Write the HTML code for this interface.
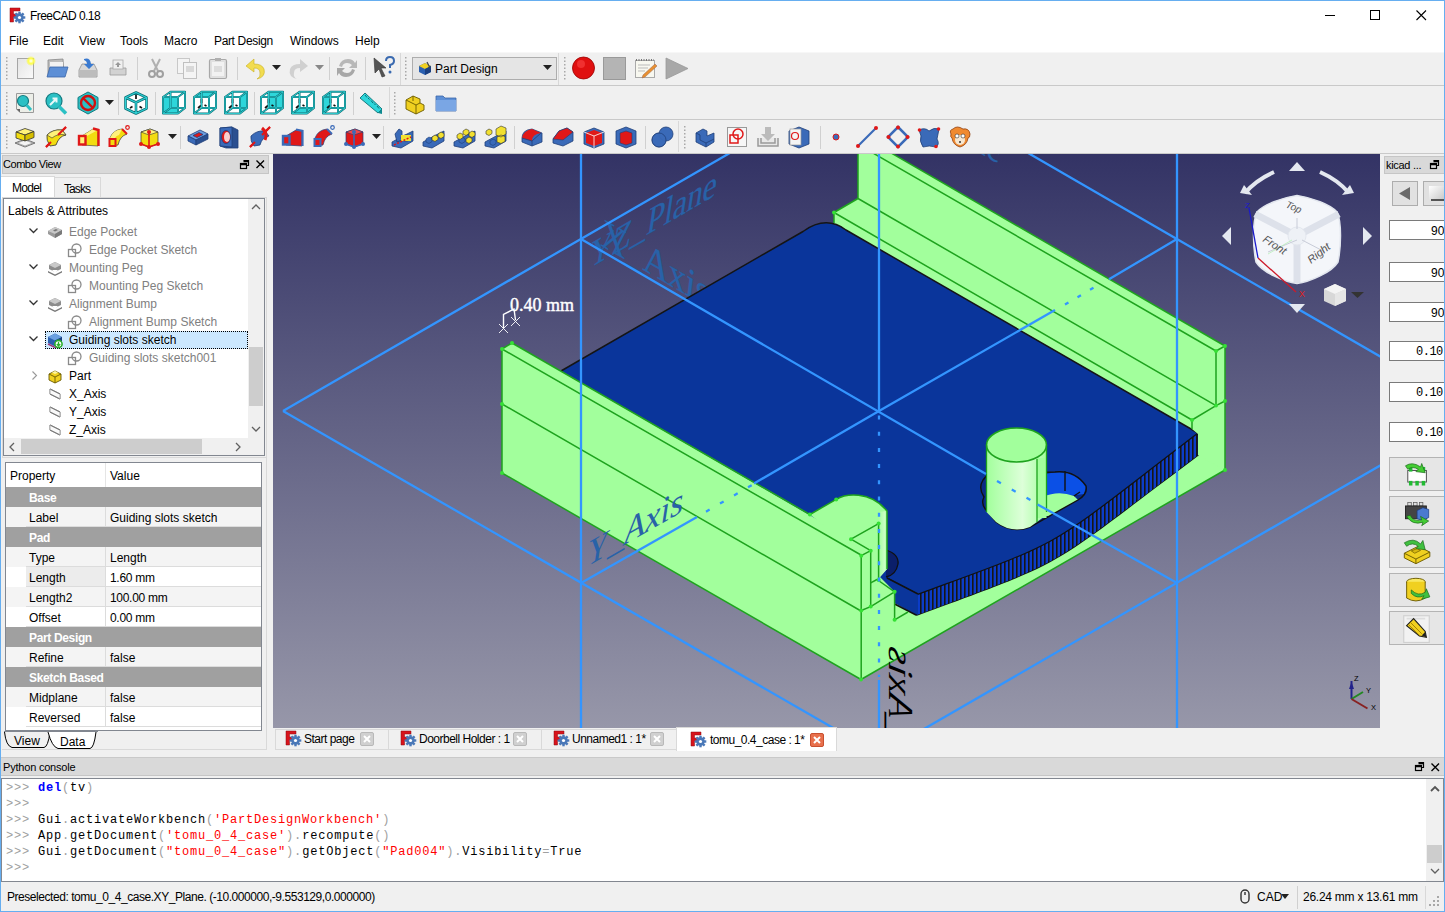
<!DOCTYPE html>
<html><head><meta charset="utf-8"><style>*{margin:0;padding:0;box-sizing:border-box}
html,body{width:1445px;height:912px;overflow:hidden;background:#f0f0f0;font-family:"Liberation Sans",sans-serif;font-size:12px;color:#000}
.a{position:absolute}
.t{position:absolute;white-space:nowrap;line-height:14px;height:14px}
.g{color:#808080}
svg{position:absolute;overflow:visible}
.mono{font-family:"Liberation Mono",monospace;font-size:12px;letter-spacing:0.8px}
.pr{color:#a0a0a0}
.kw{color:#0000ff;font-weight:bold}
.st{color:#ff0000}
#frame{position:absolute;left:0;top:0;width:1445px;height:912px;border:1px solid #66aef0;pointer-events:none;z-index:50}
</style></head><body>
<div class="a" style="left:0px;top:0px;width:1445px;height:52px;background:#fff"></div>
<svg style="left:9px;top:7px" width="17" height="17" viewBox="0 0 17 17"><path d="M1,1 H11 V4 H4.5 V7 H9 V10 H4.5 V15 H1 Z" fill="#d8141c"/><path d="M1,1 H11 V4 H4.5 V7 H9 V10 H4.5 V15 H1 Z" fill="none" stroke="#8a0a10" stroke-width="0.5"/><g transform="translate(10.5,10.5)"><circle r="4.2" fill="#4a78b8"/><g fill="#4a78b8"><rect x="-1.2" y="-5.8" width="2.4" height="11.6"/><rect x="-5.8" y="-1.2" width="11.6" height="2.4"/><rect x="-1.2" y="-5.8" width="2.4" height="11.6" transform="rotate(45)"/><rect x="-1.2" y="-5.8" width="2.4" height="11.6" transform="rotate(-45)"/></g><circle r="1.6" fill="#fff"/></g></svg>
<div class="t " style="left:30px;top:9px;letter-spacing:-0.55px">FreeCAD 0.18</div>
<svg style="left:1318px;top:8px" width="22" height="14" viewBox="0 0 22 14"><path d="M7,7.5 H17" stroke="#000" stroke-width="1"/></svg>
<svg style="left:1364px;top:8px" width="22" height="14" viewBox="0 0 22 14"><rect x="6.5" y="2.5" width="9" height="9" fill="none" stroke="#000" stroke-width="1"/></svg>
<svg style="left:1410px;top:8px" width="22" height="14" viewBox="0 0 22 14"><path d="M6.5,2.5 L16,12 M16,2.5 L6.5,12" stroke="#000" stroke-width="1.1"/></svg>
<div class="t " style="left:9px;top:34px;">File</div>
<div class="t " style="left:43px;top:34px;">Edit</div>
<div class="t " style="left:79px;top:34px;">View</div>
<div class="t " style="left:120px;top:34px;">Tools</div>
<div class="t " style="left:164px;top:34px;">Macro</div>
<div class="t " style="left:214px;top:34px;letter-spacing:-0.35px">Part Design</div>
<div class="t " style="left:290px;top:34px;">Windows</div>
<div class="t " style="left:355px;top:34px;">Help</div>
<div class="a" style="left:0px;top:52px;width:1445px;height:1px;background:#f7f7f7"></div>
<div class="a" style="left:1px;top:85px;width:1443px;height:1px;background:#c9c9c9"></div>
<div class="a" style="left:1px;top:119px;width:1443px;height:1px;background:#c9c9c9"></div>
<div class="a" style="left:1px;top:153px;width:1443px;height:1px;background:#c9c9c9"></div>
<svg style="left:5px;top:56px" width="4" height="25" viewBox="0 0 4 25"><rect x="1" y="1.0" width="1.5" height="1.5" fill="#a8a8a8"/><rect x="1" y="4.5" width="1.5" height="1.5" fill="#a8a8a8"/><rect x="1" y="8.0" width="1.5" height="1.5" fill="#a8a8a8"/><rect x="1" y="11.5" width="1.5" height="1.5" fill="#a8a8a8"/><rect x="1" y="15.0" width="1.5" height="1.5" fill="#a8a8a8"/><rect x="1" y="18.5" width="1.5" height="1.5" fill="#a8a8a8"/><rect x="1" y="22.0" width="1.5" height="1.5" fill="#a8a8a8"/></svg>
<svg style="left:14px;top:56px" width="24" height="24" viewBox="0 0 24 24"><rect x="3.5" y="2.5" width="16" height="20" fill="#eeeeee" stroke="#a6a6a6"/><rect x="4" y="3" width="15" height="19" fill="url(#pg)"/><defs><linearGradient id="pg" x1="0" y1="0" x2="1" y2="1"><stop offset="0" stop-color="#e4e4e4"/><stop offset="1" stop-color="#fafafa"/></linearGradient><radialGradient id="sun"><stop offset="0" stop-color="#fff"/><stop offset="0.5" stop-color="#ffff50"/><stop offset="1" stop-color="#ffff00" stop-opacity="0"/></radialGradient></defs><circle cx="17" cy="5" r="5" fill="url(#sun)"/></svg>
<svg style="left:44px;top:56px" width="24" height="24" viewBox="0 0 24 24"><path d="M4,4 L19,3 L20,20 L4,20 Z" fill="#bdbdbd" stroke="#888" stroke-width="0.8"/><path d="M6,6 H19 V18 H6Z" fill="#f2f2f2"/><path d="M6,11 L24,11 L21,21 L3,21 Z" fill="#5d8fd6" stroke="#3a66a8" stroke-width="0.8"/></svg>
<svg style="left:76px;top:56px" width="24" height="24" viewBox="0 0 24 24"><path d="M3,14 L6,8 H18 L21,14 V21 H3 Z" fill="#d7d7d7" stroke="#909090" stroke-width="0.8"/><rect x="3.5" y="14" width="17" height="6.5" fill="#bcbcbc"/><path d="M8,3 Q14,1 15,8 L18,8 L13,13 L8,8 L11,8 Q11,5 8,4Z" fill="#3a7ad0"/></svg>
<svg style="left:106px;top:56px" width="24" height="24" viewBox="0 0 24 24"><path d="M4,12 H20 V19 H4Z" fill="#d2d2d2" stroke="#999" stroke-width="0.8"/><rect x="7" y="4" width="10" height="9" fill="#f0f0f0" stroke="#aaa" stroke-width="0.8"/><path d="M12,6 L9,9 H11 V11 H13 V9 H15Z" fill="#999"/></svg>
<div class="a" style="left:137px;top:57px;width:1px;height:23px;background:#d0d0d0"></div>
<svg style="left:144px;top:56px" width="24" height="24" viewBox="0 0 24 24"><path d="M8,3 L14,15 M16,3 L10,15" stroke="#b0b0b0" stroke-width="2"/><circle cx="8" cy="18" r="3" fill="none" stroke="#a0a0a0" stroke-width="2"/><circle cx="16" cy="18" r="3" fill="none" stroke="#a0a0a0" stroke-width="2"/></svg>
<svg style="left:175px;top:56px" width="24" height="24" viewBox="0 0 24 24"><rect x="2.5" y="2.5" width="12" height="15" fill="#f4f4f4" stroke="#c8c8c8"/><rect x="8.5" y="6.5" width="13" height="16" fill="#f4f4f4" stroke="#c0c0c0"/><rect x="11" y="10" width="8" height="6" fill="#d8d8d8"/></svg>
<svg style="left:206px;top:56px" width="24" height="24" viewBox="0 0 24 24"><rect x="3.5" y="3.5" width="17" height="19" rx="1.5" fill="#e0e0e0" stroke="#a8a8a8" stroke-width="1.2"/><rect x="6" y="6" width="12" height="14" fill="#f2f2f2"/><rect x="9" y="2" width="6" height="3" fill="#b0b0b0"/><rect x="8" y="10" width="8" height="6" fill="#dcdcdc"/></svg>
<div class="a" style="left:237px;top:57px;width:1px;height:23px;background:#d0d0d0"></div>
<svg style="left:244px;top:56px" width="24" height="24" viewBox="0 0 24 24"><path d="M10,3 L2,10 L10,16 V12 Q16,12 16,17 Q17,21 13,23 Q22,21 20,13 Q18,8 10,8 Z" fill="#f2dc50" stroke="#c8b020" stroke-width="0.6"/></svg>
<svg style="left:272px;top:65px" width="9" height="5" viewBox="0 0 9 5"><path d="M0,0 H9 L4.5,5 Z" fill="#222"/></svg>
<svg style="left:286px;top:56px" width="24" height="24" viewBox="0 0 24 24"><path d="M14,3 L22,10 L14,16 V12 Q8,12 8,17 Q7,21 11,23 Q2,21 4,13 Q6,8 14,8 Z" fill="#d0d0d0"/></svg>
<svg style="left:315px;top:65px" width="9" height="5" viewBox="0 0 9 5"><path d="M0,0 H9 L4.5,5 Z" fill="#888"/></svg>
<div class="a" style="left:329px;top:57px;width:1px;height:23px;background:#d0d0d0"></div>
<svg style="left:335px;top:56px" width="24" height="24" viewBox="0 0 24 24"><path d="M4,10 Q6,3 13,3 Q18,3 20,7 L22,4 V12 H14 L17,9 Q15,7 12,7 Q8,7 7,11 Z" fill="#b8b8b8"/><path d="M20,14 Q18,21 11,21 Q6,21 4,17 L2,20 V12 H10 L7,15 Q9,17 12,17 Q16,17 17,13 Z" fill="#a8a8a8"/></svg>
<div class="a" style="left:365px;top:57px;width:1px;height:23px;background:#d0d0d0"></div>
<svg style="left:372px;top:56px" width="24" height="24" viewBox="0 0 24 24"><path d="M2,2 L14,12 L9,12 L13,20 L10,21 L7,13 L3,17 Z" fill="#555" stroke="#333" stroke-width="0.6"/><path d="M14,5 Q14,1 18,1 Q22,1 22,5 Q22,8 18,9 V12" fill="none" stroke="#3a6ab0" stroke-width="2"/><circle cx="18" cy="16" r="1.5" fill="#3a6ab0"/></svg>
<div class="a" style="left:400px;top:53px;width:1px;height:32px;background:#d8d8d8"></div>
<svg style="left:404px;top:56px" width="4" height="25" viewBox="0 0 4 25"><rect x="1" y="1.0" width="1.5" height="1.5" fill="#a8a8a8"/><rect x="1" y="4.5" width="1.5" height="1.5" fill="#a8a8a8"/><rect x="1" y="8.0" width="1.5" height="1.5" fill="#a8a8a8"/><rect x="1" y="11.5" width="1.5" height="1.5" fill="#a8a8a8"/><rect x="1" y="15.0" width="1.5" height="1.5" fill="#a8a8a8"/><rect x="1" y="18.5" width="1.5" height="1.5" fill="#a8a8a8"/><rect x="1" y="22.0" width="1.5" height="1.5" fill="#a8a8a8"/></svg>
<div class="a" style="left:412px;top:57px;width:145px;height:23px;background:#e5e5e5;border:1px solid #adadad"></div>
<svg style="left:417px;top:60px" width="16" height="16" viewBox="0 0 16 16"><path d="M2,6 L8,3 L14,6 L14,12 L8,15 L2,12 Z" fill="#2a5fb0"/><path d="M2,6 L8,3 L14,6 L8,9 Z" fill="#f0d020"/><path d="M8,9 L14,6 V12 L8,15Z" fill="#1a3f80"/><path d="M10,2 L13,8" stroke="#444" stroke-width="1.2"/></svg>
<div class="t " style="left:435px;top:62px;">Part Design</div>
<svg style="left:543px;top:65px" width="9" height="5" viewBox="0 0 9 5"><path d="M0,0 H9 L4.5,5 Z" fill="#222"/></svg>
<div class="a" style="left:558px;top:53px;width:1px;height:32px;background:#d8d8d8"></div>
<svg style="left:563px;top:56px" width="4" height="25" viewBox="0 0 4 25"><rect x="1" y="1.0" width="1.5" height="1.5" fill="#a8a8a8"/><rect x="1" y="4.5" width="1.5" height="1.5" fill="#a8a8a8"/><rect x="1" y="8.0" width="1.5" height="1.5" fill="#a8a8a8"/><rect x="1" y="11.5" width="1.5" height="1.5" fill="#a8a8a8"/><rect x="1" y="15.0" width="1.5" height="1.5" fill="#a8a8a8"/><rect x="1" y="18.5" width="1.5" height="1.5" fill="#a8a8a8"/><rect x="1" y="22.0" width="1.5" height="1.5" fill="#a8a8a8"/></svg>
<svg style="left:571px;top:56px" width="25" height="25" viewBox="0 0 25 25"><circle cx="12.5" cy="12" r="11" fill="#e01010" stroke="#900" stroke-width="0.8"/><circle cx="10" cy="8" r="4" fill="#ff5050" opacity="0.5"/></svg>
<svg style="left:602px;top:56px" width="25" height="25" viewBox="0 0 25 25"><rect x="1.5" y="1.5" width="22" height="22" fill="#b4b4b4" stroke="#999"/></svg>
<svg style="left:633px;top:56px" width="24" height="24" viewBox="0 0 24 24"><rect x="2.5" y="4.5" width="19" height="17" fill="#f8f8f0" stroke="#aaa"/><path d="M3,4 H21" stroke="#777" stroke-width="2" stroke-dasharray="1,1.5"/><path d="M5,9 H17 M5,12 H15 M5,15 H12" stroke="#bbb"/><path d="M10,19 L22,8 L24,10 L12,21 L9,22Z" fill="#e89030" stroke="#965" stroke-width="0.5"/></svg>
<svg style="left:664px;top:56px" width="26" height="25" viewBox="0 0 26 25"><path d="M2,2 L24,12.5 L2,23 Z" fill="#a8a8a8" stroke="#999" stroke-width="0.8"/></svg>
<svg style="left:5px;top:91px" width="4" height="25" viewBox="0 0 4 25"><rect x="1" y="1.0" width="1.5" height="1.5" fill="#a8a8a8"/><rect x="1" y="4.5" width="1.5" height="1.5" fill="#a8a8a8"/><rect x="1" y="8.0" width="1.5" height="1.5" fill="#a8a8a8"/><rect x="1" y="11.5" width="1.5" height="1.5" fill="#a8a8a8"/><rect x="1" y="15.0" width="1.5" height="1.5" fill="#a8a8a8"/><rect x="1" y="18.5" width="1.5" height="1.5" fill="#a8a8a8"/><rect x="1" y="22.0" width="1.5" height="1.5" fill="#a8a8a8"/></svg>
<svg style="left:13px;top:91px" width="24" height="24" viewBox="0 0 24 24"><path d="M3.5,2.5 H20.5 V21.5 H7 L3.5,18 Z" fill="#eceee8" stroke="#9a9a9a"/><path d="M3.5,18 L7,18 L7,21.5Z" fill="#666"/><circle cx="10" cy="10" r="5.5" fill="#2bc0c4" stroke="#157a80" stroke-width="1.2"/><path d="M13.5,14 L18,19" stroke="#2bc0c4" stroke-width="3"/></svg>
<svg style="left:44px;top:91px" width="24" height="24" viewBox="0 0 24 24"><circle cx="10" cy="10" r="8" fill="#2bc0c4" stroke="#157a80" stroke-width="1.2"/><path d="M15,15.5 L22,22.5" stroke="#2bc0c4" stroke-width="3.5"/><path d="M6,14 L12,8 M8.5,7.5 H12.5 V11.5" stroke="#e8f8f8" stroke-width="2" fill="none"/></svg>
<svg style="left:76px;top:91px" width="24" height="24" viewBox="0 0 24 24"><path d="M12,1 L22,6.5 V17.5 L12,23 L2,17.5 V6.5 Z" fill="#2bc0c4" stroke="#157a80" stroke-width="1"/><circle cx="12" cy="12" r="7" fill="none" stroke="#d01010" stroke-width="2.4"/><path d="M7,7 L17,17" stroke="#d01010" stroke-width="2.4"/></svg>
<svg style="left:105px;top:100px" width="9" height="5" viewBox="0 0 9 5"><path d="M0,0 H9 L4.5,5 Z" fill="#222"/></svg>
<div class="a" style="left:118px;top:92px;width:1px;height:23px;background:#d0d0d0"></div>
<svg style="left:124px;top:91px" width="24" height="24" viewBox="0 0 24 24"><path d="M12,1.5 L22.5,6.5 V17.5 L12,22.5 L1.5,17.5 V6.5 Z" fill="#fff"/><g fill="none" stroke-linejoin="round"><path d="M12,1.5 L22.5,6.5 V17.5 L12,22.5 L1.5,17.5 V6.5 Z M1.5,6.5 L12,11.5 L22.5,6.5 M12,11.5 V22.5" stroke="#0e6e74" stroke-width="2.6"/><path d="M12,1.5 L22.5,6.5 V17.5 L12,22.5 L1.5,17.5 V6.5 Z M1.5,6.5 L12,11.5 L22.5,6.5 M12,11.5 V22.5" stroke="#2ed0d4" stroke-width="1.3"/></g><path d="M12,4 V8 M6,17 L8.5,15.5 M18,17 L15.5,15.5" stroke="#111" stroke-width="1.7"/></svg>
<div class="a" style="left:155px;top:92px;width:1px;height:23px;background:#d0d0d0"></div>
<svg style="left:162px;top:91px" width="24" height="24" viewBox="0 0 24 24"><path d="M1,6 L8.5,0.8 H23 V17 L16,22.5 H1 Z" fill="#fff"/><path d="M1,6 L16,6 L16,22.5 L1,22.5 Z" fill="#2ed6da"/><path d="M1,6 L16,6 L16,22.5 L1,22.5 Z M8.5,0.8 L23,0.8 L23,17 L8.5,17 Z M1,6 L8.5,0.8 M16,6 L23,0.8 M16,22.5 L23,17 M1,22.5 L8.5,17" fill="none" stroke="#0e6e74" stroke-width="2" stroke-linejoin="round"/><path d="M1,6 L16,6 L16,22.5 L1,22.5 Z M8.5,0.8 L23,0.8 L23,17 L8.5,17 Z M1,6 L8.5,0.8 M16,6 L23,0.8 M16,22.5 L23,17 M1,22.5 L8.5,17" fill="none" stroke="#2ed0d4" stroke-width="0.9" stroke-linejoin="round"/></svg>
<svg style="left:193px;top:91px" width="24" height="24" viewBox="0 0 24 24"><path d="M1,6 L8.5,0.8 H23 V17 L16,22.5 H1 Z" fill="#fff"/><path d="M1,6 L8.5,0.8 L23,0.8 L16,6 Z" fill="#2ed6da"/><path d="M8.5,8 V12 M5,17 L8,14.5 M11.5,14 L13.5,15" stroke="#111" stroke-width="1.7"/><path d="M1,6 L16,6 L16,22.5 L1,22.5 Z M8.5,0.8 L23,0.8 L23,17 L8.5,17 Z M1,6 L8.5,0.8 M16,6 L23,0.8 M16,22.5 L23,17 M1,22.5 L8.5,17" fill="none" stroke="#0e6e74" stroke-width="2" stroke-linejoin="round"/><path d="M1,6 L16,6 L16,22.5 L1,22.5 Z M8.5,0.8 L23,0.8 L23,17 L8.5,17 Z M1,6 L8.5,0.8 M16,6 L23,0.8 M16,22.5 L23,17 M1,22.5 L8.5,17" fill="none" stroke="#2ed0d4" stroke-width="0.9" stroke-linejoin="round"/></svg>
<svg style="left:224px;top:91px" width="24" height="24" viewBox="0 0 24 24"><path d="M1,6 L8.5,0.8 H23 V17 L16,22.5 H1 Z" fill="#fff"/><path d="M16,6 L23,0.8 L23,17 L16,22.5 Z" fill="#2ed6da"/><path d="M8.5,8 V12 M5,17 L8,14.5 M11.5,14 L13.5,15" stroke="#111" stroke-width="1.7"/><path d="M1,6 L16,6 L16,22.5 L1,22.5 Z M8.5,0.8 L23,0.8 L23,17 L8.5,17 Z M1,6 L8.5,0.8 M16,6 L23,0.8 M16,22.5 L23,17 M1,22.5 L8.5,17" fill="none" stroke="#0e6e74" stroke-width="2" stroke-linejoin="round"/><path d="M1,6 L16,6 L16,22.5 L1,22.5 Z M8.5,0.8 L23,0.8 L23,17 L8.5,17 Z M1,6 L8.5,0.8 M16,6 L23,0.8 M16,22.5 L23,17 M1,22.5 L8.5,17" fill="none" stroke="#2ed0d4" stroke-width="0.9" stroke-linejoin="round"/></svg>
<div class="a" style="left:254px;top:92px;width:1px;height:23px;background:#d0d0d0"></div>
<svg style="left:260px;top:91px" width="24" height="24" viewBox="0 0 24 24"><path d="M1,6 L8.5,0.8 H23 V17 L16,22.5 H1 Z" fill="#fff"/><path d="M8.5,0.8 L23,0.8 L23,17 L8.5,17 Z" fill="#2ed6da"/><path d="M8.5,8 V12 M5,17 L8,14.5 M11.5,14 L13.5,15" stroke="#111" stroke-width="1.7"/><path d="M1,6 L16,6 L16,22.5 L1,22.5 Z M8.5,0.8 L23,0.8 L23,17 L8.5,17 Z M1,6 L8.5,0.8 M16,6 L23,0.8 M16,22.5 L23,17 M1,22.5 L8.5,17" fill="none" stroke="#0e6e74" stroke-width="2" stroke-linejoin="round"/><path d="M1,6 L16,6 L16,22.5 L1,22.5 Z M8.5,0.8 L23,0.8 L23,17 L8.5,17 Z M1,6 L8.5,0.8 M16,6 L23,0.8 M16,22.5 L23,17 M1,22.5 L8.5,17" fill="none" stroke="#2ed0d4" stroke-width="0.9" stroke-linejoin="round"/></svg>
<svg style="left:291px;top:91px" width="24" height="24" viewBox="0 0 24 24"><path d="M1,6 L8.5,0.8 H23 V17 L16,22.5 H1 Z" fill="#fff"/><path d="M1,22.5 L8.5,17 L23,17 L16,22.5 Z" fill="#2ed6da"/><path d="M8.5,8 V12 M5,17 L8,14.5 M11.5,14 L13.5,15" stroke="#111" stroke-width="1.7"/><path d="M1,6 L16,6 L16,22.5 L1,22.5 Z M8.5,0.8 L23,0.8 L23,17 L8.5,17 Z M1,6 L8.5,0.8 M16,6 L23,0.8 M16,22.5 L23,17 M1,22.5 L8.5,17" fill="none" stroke="#0e6e74" stroke-width="2" stroke-linejoin="round"/><path d="M1,6 L16,6 L16,22.5 L1,22.5 Z M8.5,0.8 L23,0.8 L23,17 L8.5,17 Z M1,6 L8.5,0.8 M16,6 L23,0.8 M16,22.5 L23,17 M1,22.5 L8.5,17" fill="none" stroke="#2ed0d4" stroke-width="0.9" stroke-linejoin="round"/></svg>
<svg style="left:322px;top:91px" width="24" height="24" viewBox="0 0 24 24"><path d="M1,6 L8.5,0.8 H23 V17 L16,22.5 H1 Z" fill="#fff"/><path d="M1,6 L8.5,0.8 L8.5,17 L1,22.5 Z" fill="#2ed6da"/><path d="M8.5,8 V12 M5,17 L8,14.5 M11.5,14 L13.5,15" stroke="#111" stroke-width="1.7"/><path d="M1,6 L16,6 L16,22.5 L1,22.5 Z M8.5,0.8 L23,0.8 L23,17 L8.5,17 Z M1,6 L8.5,0.8 M16,6 L23,0.8 M16,22.5 L23,17 M1,22.5 L8.5,17" fill="none" stroke="#0e6e74" stroke-width="2" stroke-linejoin="round"/><path d="M1,6 L16,6 L16,22.5 L1,22.5 Z M8.5,0.8 L23,0.8 L23,17 L8.5,17 Z M1,6 L8.5,0.8 M16,6 L23,0.8 M16,22.5 L23,17 M1,22.5 L8.5,17" fill="none" stroke="#2ed0d4" stroke-width="0.9" stroke-linejoin="round"/></svg>
<div class="a" style="left:353px;top:92px;width:1px;height:23px;background:#d0d0d0"></div>
<svg style="left:359px;top:91px" width="24" height="24" viewBox="0 0 24 24"><path d="M1,7 L6,2 L23,18 L19,22 Z" fill="#2ed6da" stroke="#0e6e74" stroke-width="0.9"/><path d="M19,22 L23,18 V23 Z" fill="#0e8a90"/><path d="M6,4 L8,6.5 M9,7 L10.5,8.5 M12,9.5 L14,12 M15,12.5 L16.5,14 M18,15 L20,17.5" stroke="#0e6e74" stroke-width="1"/></svg>
<div class="a" style="left:389px;top:87px;width:1px;height:31px;background:#d8d8d8"></div>
<svg style="left:393px;top:91px" width="4" height="25" viewBox="0 0 4 25"><rect x="1" y="1.0" width="1.5" height="1.5" fill="#a8a8a8"/><rect x="1" y="4.5" width="1.5" height="1.5" fill="#a8a8a8"/><rect x="1" y="8.0" width="1.5" height="1.5" fill="#a8a8a8"/><rect x="1" y="11.5" width="1.5" height="1.5" fill="#a8a8a8"/><rect x="1" y="15.0" width="1.5" height="1.5" fill="#a8a8a8"/><rect x="1" y="18.5" width="1.5" height="1.5" fill="#a8a8a8"/><rect x="1" y="22.0" width="1.5" height="1.5" fill="#a8a8a8"/></svg>
<svg style="left:403px;top:91px" width="24" height="24" viewBox="0 0 24 24"><path d="M3,9 L10,5 L17,8 V12 L21,14 V19 L13,23 L3,18 Z" fill="#f0d020" stroke="#6a5a00" stroke-width="0.9"/><path d="M3,9 L13,14 V23 M13,14 L17,12 M10,5 L10,10" stroke="#6a5a00" stroke-width="0.9" fill="none"/></svg>
<svg style="left:434px;top:91px" width="24" height="24" viewBox="0 0 24 24"><path d="M2,5 H9 L11,7 H22 V20 H2 Z" fill="#5d8fd6" stroke="#3a66a8" stroke-width="0.8"/><path d="M2,9 H22 V20 H2Z" fill="#7aa6e4"/></svg>
<svg style="left:5px;top:125px" width="4" height="25" viewBox="0 0 4 25"><rect x="1" y="1.0" width="1.5" height="1.5" fill="#a8a8a8"/><rect x="1" y="4.5" width="1.5" height="1.5" fill="#a8a8a8"/><rect x="1" y="8.0" width="1.5" height="1.5" fill="#a8a8a8"/><rect x="1" y="11.5" width="1.5" height="1.5" fill="#a8a8a8"/><rect x="1" y="15.0" width="1.5" height="1.5" fill="#a8a8a8"/><rect x="1" y="18.5" width="1.5" height="1.5" fill="#a8a8a8"/><rect x="1" y="22.0" width="1.5" height="1.5" fill="#a8a8a8"/></svg>
<svg style="left:13px;top:125px" width="24" height="24" viewBox="0 0 24 24"><path d="M2,18 L12,14 L22,18 L12,22 Z" fill="#f4f4f4" stroke="#666" stroke-width="0.9"/><path d="M4,18 L12,15 L20,18 L12,21 Z" fill="none" stroke="#888" stroke-width="0.7"/><path d="M3,7 L12,3.5 L21,6.5 L12,10 Z" fill="#fff27a" stroke="#333" stroke-width="0.8"/><path d="M3,7 L12,10 V16 L3,13 Z" fill="#f2dc10" stroke="#333" stroke-width="0.8"/><path d="M12,10 L21,6.5 V12.5 L12,16 Z" fill="#d6be00" stroke="#333" stroke-width="0.8"/></svg>
<svg style="left:44px;top:125px" width="24" height="24" viewBox="0 0 24 24"><path d="M2,22 L22,2" stroke="#e01818" stroke-width="2"/><path d="M3,10 Q9,4 18,5 L22,10 Q15,11 12,20 L6,21 Q2,15 3,10 Z" fill="#f2dc10" stroke="#333" stroke-width="0.8"/><path d="M3,10 Q9,4 18,5 L22,10 Q14,8 8,13 Z" fill="#fff27a" stroke="#333" stroke-width="0.6"/><path d="M14,10 L22,2 M2,22 L7,17" stroke="#e01818" stroke-width="2"/></svg>
<svg style="left:76px;top:125px" width="24" height="24" viewBox="0 0 24 24"><path d="M6,11 L17,4 L22,5 V21 L6,20 Z" fill="#f2dc10" stroke="#333" stroke-width="0.6"/><path d="M6,11 L17,4 L22,5 L9,12 Z" fill="#fff27a"/><rect x="3" y="11" width="6.5" height="8.5" fill="#fff27a" stroke="#e01818" stroke-width="2.4"/><path d="M17,3.5 L22.5,5 V21" stroke="#e01818" stroke-width="2.4" fill="none"/></svg>
<svg style="left:106px;top:125px" width="24" height="24" viewBox="0 0 24 24"><path d="M4,13 Q7,5 16,4 L21,9 Q14,11 12,20 L5,21 Z" fill="#f2dc10" stroke="#333" stroke-width="0.7"/><path d="M4,13 Q7,5 16,4 L13,10 Q9,11 9,14 Z" fill="#fff27a"/><rect x="3.5" y="14" width="6" height="7" fill="#f2dc10" stroke="#e01818" stroke-width="2"/><path d="M16,4 L21,9" stroke="#e01818" stroke-width="2"/><circle cx="21.5" cy="2.5" r="1.8" fill="none" stroke="#e01818" stroke-width="1.2"/></svg>
<svg style="left:137px;top:125px" width="24" height="24" viewBox="0 0 24 24"><path d="M4,7 L13,4 L21,7 V19 L12,22 L4,19 Z" fill="#f2dc10" stroke="#333" stroke-width="0.7"/><path d="M4,7 L13,4 L21,7 L12,10 Z" fill="#fff27a" stroke="#333" stroke-width="0.6"/><path d="M4,19 L12,22 L21,19 M12,7 V22" stroke="#e01818" stroke-width="1.6" fill="none"/><circle cx="4" cy="19" r="2" fill="#e01818"/><circle cx="12" cy="22" r="2" fill="#e01818"/><circle cx="21" cy="19" r="2" fill="#e01818"/><circle cx="12" cy="7" r="2" fill="#e01818"/></svg>
<svg style="left:168px;top:134px" width="9" height="5" viewBox="0 0 9 5"><path d="M0,0 H9 L4.5,5 Z" fill="#222"/></svg>
<div class="a" style="left:180px;top:126px;width:1px;height:23px;background:#d0d0d0"></div>
<svg style="left:186px;top:125px" width="24" height="24" viewBox="0 0 24 24"><path d="M2,11 L14,5 L22,9 L10,15 Z" fill="#6c9ee0" stroke="#1f3f78" stroke-width="0.8"/><path d="M2,11 L10,15 V20 L2,16 Z" fill="#3a6ab8" stroke="#1f3f78" stroke-width="0.8"/><path d="M10,15 L22,9 V14 L10,20 Z" fill="#2a4f90" stroke="#1f3f78" stroke-width="0.8"/><path d="M7,10.5 L13,7.5 L17,9.5 L11,12.5 Z" fill="#e01818" stroke="#1f3f78" stroke-width="0.8"/></svg>
<svg style="left:217px;top:125px" width="24" height="24" viewBox="0 0 24 24"><path d="M3,3 L15,2 L21,5 V23 L9,23 L3,21 Z" fill="#2a4f90" stroke="#1f3f78" stroke-width="0.8"/><path d="M3,3 L15,2 V22 L3,21 Z" fill="#3a6ab8" stroke="#1f3f78" stroke-width="0.8"/><ellipse cx="9" cy="12" rx="4.5" ry="6.5" fill="#e01818" stroke="#1f3f78" stroke-width="0.8"/><ellipse cx="10" cy="12" rx="3" ry="5" fill="#fff" opacity="0.8"/></svg>
<svg style="left:248px;top:125px" width="24" height="24" viewBox="0 0 24 24"><path d="M2,22 L22,2" stroke="#e01818" stroke-width="2"/><path d="M3,11 Q9,5 17,6 L21,11 Q14,12 12,20 L6,21 Q2,16 3,11 Z" fill="#3a6ab8" stroke="#1f3f78" stroke-width="0.8"/><path d="M14,3 Q20,8 17,15" stroke="#e01818" stroke-width="3" fill="none"/><path d="M14,10 L22,2 M2,22 L7,17" stroke="#e01818" stroke-width="2"/></svg>
<svg style="left:280px;top:125px" width="24" height="24" viewBox="0 0 24 24"><path d="M6,11 L16,5 L22,6 V21 L6,20 Z" fill="#e01818" stroke="#1f3f78" stroke-width="0.7"/><rect x="3" y="11" width="6.5" height="8.5" fill="#e01818" stroke="#3a6ab8" stroke-width="2.4"/><path d="M16,4.5 L22.5,6 V21" stroke="#3a6ab8" stroke-width="2.2" fill="none"/></svg>
<svg style="left:311px;top:125px" width="24" height="24" viewBox="0 0 24 24"><path d="M4,13 Q7,5 16,4 L21,9 Q14,11 12,20 L5,21 Z" fill="#e01818" stroke="#1f3f78" stroke-width="0.7"/><rect x="3.5" y="14" width="6" height="7" fill="#e01818" stroke="#3a6ab8" stroke-width="2"/><path d="M16,4 L21,9" stroke="#3a6ab8" stroke-width="2"/><circle cx="21.5" cy="2.5" r="1.8" fill="none" stroke="#3a6ab8" stroke-width="1.2"/></svg>
<svg style="left:342px;top:125px" width="24" height="24" viewBox="0 0 24 24"><path d="M4,7 L13,4 L21,7 V19 L12,22 L4,19 Z" fill="#e01818" stroke="#1f3f78" stroke-width="0.7"/><path d="M4,7 L13,4 L21,7 L12,10 Z" fill="#f04848" stroke="#1f3f78" stroke-width="0.6"/><path d="M4,19 L12,22 L21,19 M12,7 V22" stroke="#3a6ab8" stroke-width="1.6" fill="none"/><circle cx="4" cy="19" r="2" fill="#3a6ab8"/><circle cx="12" cy="22" r="2" fill="#3a6ab8"/><circle cx="21" cy="19" r="2" fill="#3a6ab8"/><circle cx="12" cy="7" r="2" fill="#3a6ab8"/></svg>
<svg style="left:372px;top:134px" width="9" height="5" viewBox="0 0 9 5"><path d="M0,0 H9 L4.5,5 Z" fill="#222"/></svg>
<div class="a" style="left:383px;top:126px;width:1px;height:23px;background:#d0d0d0"></div>
<svg style="left:391px;top:125px" width="24" height="24" viewBox="0 0 24 24"><path d="M1,17 L14,10 L22,6 V16 L10,23 L1,21 Z" fill="#3a6ab8" stroke="#1f3f78" stroke-width="0.8"/><path d="M4,9 L8,4 L11,6 V15 L6,17 Z" fill="#3a6ab8" stroke="#1f3f78" stroke-width="0.8"/><ellipse cx="15" cy="13" rx="5" ry="3" fill="#f2e030" stroke="#333" stroke-width="0.6"/><rect x="10" y="10" width="10" height="6" fill="#f2e030"/><path d="M3,20 L20,12" stroke="#e01818" stroke-width="1.5" stroke-dasharray="2,1.5"/></svg>
<svg style="left:422px;top:125px" width="24" height="24" viewBox="0 0 24 24"><path d="M1,17 L14,10 L22,6 V16 L10,23 L1,21 Z" fill="#3a6ab8" stroke="#1f3f78" stroke-width="0.8"/><path d="M4,14 l3,-2 l3,1.5 v3 l-3,2 l-3,-1.5z" fill="#3a6ab8" stroke="#1f3f78" stroke-width="0.6"/><path d="M10,12 l3,-2 l3,1.5 v3 l-3,2 l-3,-1.5z M16,9 l3,-2 l3,1.5 v3 l-3,2 l-3,-1.5z" fill="#f2e030" stroke="#333" stroke-width="0.6"/></svg>
<svg style="left:453px;top:125px" width="24" height="24" viewBox="0 0 24 24"><path d="M1,17 L14,10 L22,6 V16 L10,23 L1,21 Z" fill="#3a6ab8" stroke="#1f3f78" stroke-width="0.8"/><path d="M6,14 l3,-2 l3,1.5 v3 l-3,2 l-3,-1.5z" fill="#3a6ab8" stroke="#1f3f78" stroke-width="0.6"/><path d="M4,10 l3,-2 l3,1.5 v3 l-3,2 l-3,-1.5z M10,6 l3,-2 l3,1.5 v3 l-3,2 l-3,-1.5z M16,8 l3,-2 l3,1.5 v3 l-3,2 l-3,-1.5z M13,14 l3,-2 l3,1.5 v3 l-3,2 l-3,-1.5z" fill="#f2e030" stroke="#333" stroke-width="0.6"/></svg>
<svg style="left:484px;top:125px" width="24" height="24" viewBox="0 0 24 24"><path d="M1,17 L14,10 L22,6 V16 L10,23 L1,21 Z" fill="#3a6ab8" stroke="#1f3f78" stroke-width="0.8"/><path d="M6,16 l3,-2 l3,1.5 v3 l-3,2 l-3,-1.5z" fill="#3a6ab8" stroke="#1f3f78" stroke-width="0.6"/><path d="M12,4 l5,-3 l5,2 v6 l-5,3 l-5,-2z M13,12 l4,-2 l4,1.5 v5 l-4,2 l-4,-1.5z M2,6 l3,-2 l3,1.5 v3 l-3,2 l-3,-1.5z" fill="#f2e030" stroke="#333" stroke-width="0.6"/></svg>
<div class="a" style="left:514px;top:126px;width:1px;height:23px;background:#d0d0d0"></div>
<svg style="left:520px;top:125px" width="24" height="24" viewBox="0 0 24 24"><path d="M2,13 Q2,5 12,4 L22,8 V17 L12,21 L2,17 Z" fill="#3a6ab8" stroke="#1f3f78" stroke-width="0.8"/><path d="M2,13 Q3,6 12,4 L21,8 Q12,9 12,16 Z" fill="#e01818"/><path d="M2,13 L12,16 L21,8 M12,16 V21" stroke="#1f3f78" stroke-width="0.8" fill="none"/></svg>
<svg style="left:551px;top:125px" width="24" height="24" viewBox="0 0 24 24"><path d="M2,14 L8,6 L16,3 L22,7 V16 L12,21 L2,18 Z" fill="#3a6ab8" stroke="#1f3f78" stroke-width="0.8"/><path d="M2,14 L8,6 L16,3 L22,7 L12,15 Z" fill="#e01818" stroke="#1f3f78" stroke-width="0.6"/></svg>
<svg style="left:582px;top:125px" width="24" height="24" viewBox="0 0 24 24"><path d="M2,7 L12,3 L22,7 V19 L12,23 L2,19 Z" fill="#3a6ab8" stroke="#1f3f78" stroke-width="0.8"/><path d="M4,8 L12,5 L20,8 V18 L12,21 L4,18Z" fill="#e01818"/><path d="M2,7 L12,11 L22,7 M12,11 V23" stroke="#fff" stroke-width="0.8" fill="none"/></svg>
<svg style="left:614px;top:125px" width="24" height="24" viewBox="0 0 24 24"><path d="M2,6 L12,2 L22,6 V19 L12,23 L2,19 Z" fill="#3a6ab8" stroke="#1f3f78" stroke-width="0.8"/><path d="M6,8 L12,6 L18,8 V18 L12,20 L6,18Z" fill="#e01818" stroke="#1f3f78" stroke-width="0.6"/></svg>
<div class="a" style="left:645px;top:126px;width:1px;height:23px;background:#d0d0d0"></div>
<svg style="left:650px;top:125px" width="24" height="24" viewBox="0 0 24 24"><circle cx="9" cy="15" r="7" fill="#3a6ab8" stroke="#1f3f78" stroke-width="0.8"/><circle cx="16" cy="9" r="7" fill="#3a6ab8" stroke="#1f3f78" stroke-width="0.8"/><circle cx="9" cy="15" r="7" fill="#3a6ab8" stroke="#1f3f78" stroke-width="0.8" opacity="0.9"/></svg>
<div class="a" style="left:678px;top:121px;width:1px;height:31px;background:#d8d8d8"></div>
<svg style="left:683px;top:125px" width="4" height="25" viewBox="0 0 4 25"><rect x="1" y="1.0" width="1.5" height="1.5" fill="#a8a8a8"/><rect x="1" y="4.5" width="1.5" height="1.5" fill="#a8a8a8"/><rect x="1" y="8.0" width="1.5" height="1.5" fill="#a8a8a8"/><rect x="1" y="11.5" width="1.5" height="1.5" fill="#a8a8a8"/><rect x="1" y="15.0" width="1.5" height="1.5" fill="#a8a8a8"/><rect x="1" y="18.5" width="1.5" height="1.5" fill="#a8a8a8"/><rect x="1" y="22.0" width="1.5" height="1.5" fill="#a8a8a8"/></svg>
<svg style="left:693px;top:125px" width="24" height="24" viewBox="0 0 24 24"><path d="M3,8 L10,4 L14,6 V11 L21,8 V17 L13,22 L3,17 Z" fill="#3a6ab8" stroke="#1f3f78" stroke-width="0.8"/><path d="M3,8 L7,10 V15 L13,18 V22 M13,18 L21,14" stroke="#1f3f78" stroke-width="0.8" fill="none"/></svg>
<svg style="left:725px;top:125px" width="24" height="24" viewBox="0 0 24 24"><rect x="2.5" y="2.5" width="19" height="19" fill="#f6f6f6" stroke="#999"/><rect x="5" y="10" width="8" height="8" fill="none" stroke="#e01818" stroke-width="1.5"/><circle cx="13" cy="9" r="5" fill="none" stroke="#e01818" stroke-width="1.5"/></svg>
<svg style="left:756px;top:125px" width="24" height="24" viewBox="0 0 24 24"><path d="M2,13 V21 H22 V13 M5,13 V18 H19 V13" stroke="#999" stroke-width="1.5" fill="#e8e8e8"/><path d="M9,2 H15 V9 H19 L12,16 L5,9 H9 Z" fill="#bbb"/></svg>
<svg style="left:787px;top:125px" width="24" height="24" viewBox="0 0 24 24"><path d="M2,6 L12,2 L22,6 V19 L12,23 L2,19 Z" fill="#3a6ab8" stroke="#1f3f78" stroke-width="0.8"/><rect x="3" y="4" width="11" height="16" fill="#f4f4f4" stroke="#999" stroke-width="0.7"/><circle cx="8" cy="11" r="3.5" fill="none" stroke="#e01818" stroke-width="1.2"/></svg>
<div class="a" style="left:820px;top:126px;width:1px;height:23px;background:#d0d0d0"></div>
<svg style="left:824px;top:125px" width="24" height="24" viewBox="0 0 24 24"><circle cx="12" cy="12" r="3" fill="#3a6ab8" stroke="#e01818" stroke-width="1"/></svg>
<svg style="left:855px;top:125px" width="24" height="24" viewBox="0 0 24 24"><path d="M3,21 L21,3" stroke="#3a6ab8" stroke-width="2.2"/><circle cx="3" cy="21" r="2" fill="#e01818"/><circle cx="21" cy="3" r="2" fill="#e01818"/></svg>
<svg style="left:886px;top:125px" width="24" height="24" viewBox="0 0 24 24"><path d="M12,2 L22,12 L12,22 L2,12 Z" fill="none" stroke="#3a6ab8" stroke-width="2.5"/><circle cx="12" cy="2.5" r="2" fill="#e01818"/><circle cx="21.5" cy="12" r="2" fill="#e01818"/><circle cx="12" cy="21.5" r="2" fill="#e01818"/><circle cx="2.5" cy="12" r="2" fill="#e01818"/></svg>
<svg style="left:917px;top:125px" width="24" height="24" viewBox="0 0 24 24"><path d="M2,5 Q8,2 12,6 Q17,2 22,4 L20,14 Q23,19 19,22 Q12,20 6,22 Q2,16 4,11 Z" fill="#3a6ab8" stroke="#1f3f78" stroke-width="0.8"/><circle cx="2.5" cy="5" r="1.8" fill="#e01818"/><circle cx="21.5" cy="4" r="1.8" fill="#e01818"/><circle cx="19" cy="21.5" r="1.8" fill="#e01818"/></svg>
<svg style="left:948px;top:125px" width="24" height="24" viewBox="0 0 24 24"><path d="M3,9 Q1,5 5,4 Q9,0 15,4 Q21,3 22,9 Q22,13 20,13 Q19,20 12,22 Q5,20 4,13 Q2,12 3,9 Z" fill="#f08a30" stroke="#904010" stroke-width="0.8"/><ellipse cx="12" cy="15" rx="5" ry="5" fill="#f6e6d0"/><circle cx="9" cy="11" r="2" fill="#fff" stroke="#333" stroke-width="0.6"/><circle cx="15" cy="11" r="2" fill="#fff" stroke="#333" stroke-width="0.6"/><circle cx="12" cy="17" r="1" fill="#333"/></svg>
<div class="a" style="left:2px;top:155px;width:267px;height:19px;background:#d9d9d9;border:1px solid #c6c6c6"></div>
<div class="t " style="left:3px;top:157px;font-size:11px;letter-spacing:-0.45px">Combo View</div>
<svg style="left:240px;top:160px" width="10" height="10" viewBox="0 0 10 10"><path d="M3.5,0.5 H8.5 V5.5 H6.5" fill="none" stroke="#000" stroke-width="1.2"/><rect x="0.5" y="3.5" width="6" height="5" fill="none" stroke="#000" stroke-width="1.2"/><path d="M0.5,4.5 H6.5 M3.5,1.5 H8.5" stroke="#000" stroke-width="1.5"/></svg>
<svg style="left:256px;top:160px" width="9" height="9" viewBox="0 0 9 9"><path d="M0.5,0.5 L8,8 M8,0.5 L0.5,8" stroke="#000" stroke-width="1.4"/></svg>
<div class="a" style="left:54px;top:177px;width:47px;height:21px;background:#f0f0f0;border:1px solid #d9d9d9;border-bottom:none"></div>
<div class="a" style="left:1px;top:176px;width:54px;height:23px;background:#fff;border:1px solid #d9d9d9;border-bottom:none;border-left:none"></div>
<div class="t " style="left:12px;top:181px;letter-spacing:-0.7px">Model</div>
<div class="t " style="left:64px;top:182px;letter-spacing:-0.9px">Tasks</div>
<div class="a" style="left:2px;top:197px;width:265px;height:261px;border:1px solid #d9d9d9;background:#f0f0f0"></div>
<div class="a" style="left:3px;top:198px;width:262px;height:258px;background:#fff;border:1px solid #828790"></div>
<div class="t " style="left:8px;top:204px;">Labels &amp; Attributes</div>
<div class="a" style="left:45px;top:331px;width:203px;height:18px;background:#cce8ff;border:1px dotted #000"></div>
<svg style="left:29px;top:228px" width="9" height="6" viewBox="0 0 9 6"><path d="M0.5,0.5 L4.5,4.5 L8.5,0.5" fill="none" stroke="#333" stroke-width="1.3"/></svg>
<svg style="left:47px;top:224px" width="16" height="16" viewBox="0 0 16 16"><path d="M1,7 L8,3 L15,6 L15,10 L8,14 L1,10 Z" fill="#9a9a9a"/><path d="M1,7 L8,3 L15,6 L8,10 Z" fill="#c8c8c8"/><path d="M8,10 L15,6 L15,10 L8,14 Z" fill="#7a7a7a"/><path d="M6,6.5 L9,5 L11,6 L8,7.5 Z" fill="#777"/></svg>
<div class="t g" style="left:69px;top:225px;">Edge Pocket</div>
<svg style="left:67px;top:242px" width="16" height="16" viewBox="0 0 16 16"><rect x="1.5" y="7.5" width="7" height="7" fill="none" stroke="#8a8a8a" stroke-width="1.3"/><circle cx="9.5" cy="6.5" r="4.5" fill="none" stroke="#8a8a8a" stroke-width="1.3"/></svg>
<div class="t g" style="left:89px;top:243px;">Edge Pocket Sketch</div>
<svg style="left:29px;top:264px" width="9" height="6" viewBox="0 0 9 6"><path d="M0.5,0.5 L4.5,4.5 L8.5,0.5" fill="none" stroke="#333" stroke-width="1.3"/></svg>
<svg style="left:47px;top:260px" width="16" height="16" viewBox="0 0 16 16"><path d="M2,5 L8,2 L14,5 L14,9 L8,12 L2,9 Z" fill="#8c8c8c"/><path d="M2,5 L8,2 L14,5 L8,8 Z" fill="#c9c9c9"/><path d="M1,11 L8,14.5 L15,11 L15,12.5 L8,16 L1,12.5 Z" fill="#777"/><path d="M5,10 L8,13 L11,10" fill="#fff"/></svg>
<div class="t g" style="left:69px;top:261px;">Mounting Peg</div>
<svg style="left:67px;top:278px" width="16" height="16" viewBox="0 0 16 16"><rect x="1.5" y="7.5" width="7" height="7" fill="none" stroke="#8a8a8a" stroke-width="1.3"/><circle cx="9.5" cy="6.5" r="4.5" fill="none" stroke="#8a8a8a" stroke-width="1.3"/></svg>
<div class="t g" style="left:89px;top:279px;">Mounting Peg Sketch</div>
<svg style="left:29px;top:300px" width="9" height="6" viewBox="0 0 9 6"><path d="M0.5,0.5 L4.5,4.5 L8.5,0.5" fill="none" stroke="#333" stroke-width="1.3"/></svg>
<svg style="left:47px;top:296px" width="16" height="16" viewBox="0 0 16 16"><path d="M2,5 L8,2 L14,5 L14,9 L8,12 L2,9 Z" fill="#8c8c8c"/><path d="M2,5 L8,2 L14,5 L8,8 Z" fill="#c9c9c9"/><path d="M1,11 L8,14.5 L15,11 L15,12.5 L8,16 L1,12.5 Z" fill="#777"/><path d="M5,10 L8,13 L11,10" fill="#fff"/></svg>
<div class="t g" style="left:69px;top:297px;">Alignment Bump</div>
<svg style="left:67px;top:314px" width="16" height="16" viewBox="0 0 16 16"><rect x="1.5" y="7.5" width="7" height="7" fill="none" stroke="#8a8a8a" stroke-width="1.3"/><circle cx="9.5" cy="6.5" r="4.5" fill="none" stroke="#8a8a8a" stroke-width="1.3"/></svg>
<div class="t g" style="left:89px;top:315px;">Alignment Bump Sketch</div>
<svg style="left:29px;top:336px" width="9" height="6" viewBox="0 0 9 6"><path d="M0.5,0.5 L4.5,4.5 L8.5,0.5" fill="none" stroke="#333" stroke-width="1.3"/></svg>
<svg style="left:47px;top:332px" width="16" height="16" viewBox="0 0 16 16"><path d="M1,5 L8,1.5 L15,5 L15,11 L8,14.5 L1,11 Z" fill="#2a5fb0"/><path d="M1,5 L8,1.5 L15,5 L8,8.5 Z" fill="#6aa0e0"/><path d="M8,8.5 L15,5 L15,11 L8,14.5 Z" fill="#1a3f80"/><path d="M1,12 L8,15.5 L15,12" fill="none" stroke="#a03a7a" stroke-width="1.5"/><circle cx="11.5" cy="12" r="3.6" fill="#fff" stroke="#2cb02c" stroke-width="1.6"/><path d="M11.5,9.8 V13.5 M9.8,12 L11.5,14 L13.2,12" stroke="#2cb02c" stroke-width="1.2" fill="none"/></svg>
<div class="t " style="left:69px;top:333px;">Guiding slots sketch</div>
<svg style="left:67px;top:350px" width="16" height="16" viewBox="0 0 16 16"><rect x="1.5" y="7.5" width="7" height="7" fill="none" stroke="#8a8a8a" stroke-width="1.3"/><circle cx="9.5" cy="6.5" r="4.5" fill="none" stroke="#8a8a8a" stroke-width="1.3"/></svg>
<div class="t g" style="left:89px;top:351px;">Guiding slots sketch001</div>
<svg style="left:32px;top:371px" width="6" height="9" viewBox="0 0 6 9"><path d="M0.5,0.5 L4.5,4.5 L0.5,8.5" fill="none" stroke="#999" stroke-width="1.1"/></svg>
<svg style="left:47px;top:368px" width="16" height="16" viewBox="0 0 16 16"><path d="M2,6 L8,3 L14,6 L14,12 L8,15 L2,12 Z" fill="#f0d020" stroke="#6a5a00" stroke-width="0.9"/><path d="M2,6 L8,9 L14,6 M8,9 V15" stroke="#6a5a00" stroke-width="0.9" fill="none"/><path d="M5,4.5 L8,3 L11,4.5 L8,6 Z" fill="#fff6a0"/></svg>
<div class="t " style="left:69px;top:369px;">Part</div>
<svg style="left:47px;top:386px" width="16" height="16" viewBox="0 0 16 16"><path d="M3,3 L13,8 M3,8 L13,13 M3,3 V8 M13,8 V13" stroke="#888" stroke-width="1" fill="none"/><path d="M3,3 L13,8 L13,13 L3,8 Z" fill="#fafafa"/><path d="M3,3 L13,8 M3,8 L13,13" stroke="#777" stroke-width="1.1"/><path d="M3,3 V8 M13,8 V13" stroke="#aaa" stroke-width="1"/></svg>
<div class="t " style="left:69px;top:387px;">X_Axis</div>
<svg style="left:47px;top:404px" width="16" height="16" viewBox="0 0 16 16"><path d="M3,3 L13,8 M3,8 L13,13 M3,3 V8 M13,8 V13" stroke="#888" stroke-width="1" fill="none"/><path d="M3,3 L13,8 L13,13 L3,8 Z" fill="#fafafa"/><path d="M3,3 L13,8 M3,8 L13,13" stroke="#777" stroke-width="1.1"/><path d="M3,3 V8 M13,8 V13" stroke="#aaa" stroke-width="1"/></svg>
<div class="t " style="left:69px;top:405px;">Y_Axis</div>
<svg style="left:47px;top:422px" width="16" height="16" viewBox="0 0 16 16"><path d="M3,3 L13,8 M3,8 L13,13 M3,3 V8 M13,8 V13" stroke="#888" stroke-width="1" fill="none"/><path d="M3,3 L13,8 L13,13 L3,8 Z" fill="#fafafa"/><path d="M3,3 L13,8 M3,8 L13,13" stroke="#777" stroke-width="1.1"/><path d="M3,3 V8 M13,8 V13" stroke="#aaa" stroke-width="1"/></svg>
<div class="t " style="left:69px;top:423px;">Z_Axis</div>
<div class="a" style="left:248px;top:199px;width:16px;height:239px;background:#f0f0f0"></div>
<div class="a" style="left:249px;top:347px;width:14px;height:59px;background:#cdcdcd"></div>
<svg style="left:251px;top:204px" width="10" height="6" viewBox="0 0 10 6"><path d="M1,5 L5,1 L9,5" fill="none" stroke="#606060" stroke-width="1.3"/></svg>
<svg style="left:251px;top:426px" width="10" height="6" viewBox="0 0 10 6"><path d="M1,1 L5,5 L9,1" fill="none" stroke="#606060" stroke-width="1.3"/></svg>
<div class="a" style="left:4px;top:438px;width:244px;height:17px;background:#f0f0f0"></div>
<div class="a" style="left:21px;top:439px;width:181px;height:15px;background:#cdcdcd"></div>
<svg style="left:9px;top:442px" width="6" height="10" viewBox="0 0 6 10"><path d="M5,1 L1,5 L5,9" fill="none" stroke="#606060" stroke-width="1.3"/></svg>
<svg style="left:235px;top:442px" width="6" height="10" viewBox="0 0 6 10"><path d="M1,1 L5,5 L1,9" fill="none" stroke="#606060" stroke-width="1.3"/></svg>
<div class="a" style="left:248px;top:438px;width:16px;height:17px;background:#f0f0f0"></div>
<div class="a" style="left:5px;top:462px;width:257px;height:269px;background:#fff;border:1px solid #828790"></div>
<div class="t " style="left:10px;top:469px;">Property</div>
<div class="t " style="left:110px;top:469px;">Value</div>
<div class="a" style="left:105px;top:463px;width:1px;height:24px;background:#e5e5e5"></div>
<div class="a" style="left:6px;top:487px;width:255px;height:20px;background:#a0a0a0"></div>
<div class="t " style="left:29px;top:491px;color:#fff;font-weight:bold;letter-spacing:-0.35px">Base</div>
<div class="a" style="left:6px;top:507px;width:21px;height:20px;background:#f4f4f4"></div>
<div class="a" style="left:26px;top:507px;width:235px;height:20px;background:#f4f4f4"></div>
<div class="a" style="left:26px;top:526px;width:235px;height:1px;background:#dcdcdc"></div>
<div class="a" style="left:105px;top:507px;width:1px;height:20px;background:#dcdcdc"></div>
<div class="t " style="left:29px;top:511px;">Label</div>
<div class="t " style="left:110px;top:511px;">Guiding slots sketch</div>
<div class="a" style="left:6px;top:527px;width:255px;height:20px;background:#a0a0a0"></div>
<div class="t " style="left:29px;top:531px;color:#fff;font-weight:bold;letter-spacing:-0.35px">Pad</div>
<div class="a" style="left:6px;top:547px;width:21px;height:20px;background:#f4f4f4"></div>
<div class="a" style="left:26px;top:547px;width:235px;height:20px;background:#f4f4f4"></div>
<div class="a" style="left:26px;top:566px;width:235px;height:1px;background:#dcdcdc"></div>
<div class="a" style="left:105px;top:547px;width:1px;height:20px;background:#dcdcdc"></div>
<div class="t " style="left:29px;top:551px;">Type</div>
<div class="t " style="left:110px;top:551px;">Length</div>
<div class="a" style="left:6px;top:567px;width:21px;height:20px;background:#ffffff"></div>
<div class="a" style="left:26px;top:567px;width:235px;height:20px;background:#ffffff"></div>
<div class="a" style="left:26px;top:567px;width:79px;height:20px;background:#ececec"></div>
<div class="a" style="left:26px;top:586px;width:235px;height:1px;background:#dcdcdc"></div>
<div class="a" style="left:105px;top:567px;width:1px;height:20px;background:#dcdcdc"></div>
<div class="t " style="left:29px;top:571px;">Length</div>
<div class="t " style="left:110px;top:571px;letter-spacing:-0.3px">1.60 mm</div>
<div class="a" style="left:6px;top:587px;width:21px;height:20px;background:#f4f4f4"></div>
<div class="a" style="left:26px;top:587px;width:235px;height:20px;background:#f4f4f4"></div>
<div class="a" style="left:26px;top:606px;width:235px;height:1px;background:#dcdcdc"></div>
<div class="a" style="left:105px;top:587px;width:1px;height:20px;background:#dcdcdc"></div>
<div class="t " style="left:29px;top:591px;">Length2</div>
<div class="t " style="left:110px;top:591px;letter-spacing:-0.3px">100.00 mm</div>
<div class="a" style="left:6px;top:607px;width:21px;height:20px;background:#ffffff"></div>
<div class="a" style="left:26px;top:607px;width:235px;height:20px;background:#ffffff"></div>
<div class="a" style="left:26px;top:626px;width:235px;height:1px;background:#dcdcdc"></div>
<div class="a" style="left:105px;top:607px;width:1px;height:20px;background:#dcdcdc"></div>
<div class="t " style="left:29px;top:611px;">Offset</div>
<div class="t " style="left:110px;top:611px;letter-spacing:-0.3px">0.00 mm</div>
<div class="a" style="left:6px;top:627px;width:255px;height:20px;background:#a0a0a0"></div>
<div class="t " style="left:29px;top:631px;color:#fff;font-weight:bold;letter-spacing:-0.35px">Part Design</div>
<div class="a" style="left:6px;top:647px;width:21px;height:20px;background:#f4f4f4"></div>
<div class="a" style="left:26px;top:647px;width:235px;height:20px;background:#f4f4f4"></div>
<div class="a" style="left:26px;top:666px;width:235px;height:1px;background:#dcdcdc"></div>
<div class="a" style="left:105px;top:647px;width:1px;height:20px;background:#dcdcdc"></div>
<div class="t " style="left:29px;top:651px;">Refine</div>
<div class="t " style="left:110px;top:651px;">false</div>
<div class="a" style="left:6px;top:667px;width:255px;height:20px;background:#a0a0a0"></div>
<div class="t " style="left:29px;top:671px;color:#fff;font-weight:bold;letter-spacing:-0.35px">Sketch Based</div>
<div class="a" style="left:6px;top:687px;width:21px;height:20px;background:#f4f4f4"></div>
<div class="a" style="left:26px;top:687px;width:235px;height:20px;background:#f4f4f4"></div>
<div class="a" style="left:26px;top:706px;width:235px;height:1px;background:#dcdcdc"></div>
<div class="a" style="left:105px;top:687px;width:1px;height:20px;background:#dcdcdc"></div>
<div class="t " style="left:29px;top:691px;">Midplane</div>
<div class="t " style="left:110px;top:691px;">false</div>
<div class="a" style="left:6px;top:707px;width:21px;height:20px;background:#ffffff"></div>
<div class="a" style="left:26px;top:707px;width:235px;height:20px;background:#ffffff"></div>
<div class="a" style="left:26px;top:726px;width:235px;height:1px;background:#dcdcdc"></div>
<div class="a" style="left:105px;top:707px;width:1px;height:20px;background:#dcdcdc"></div>
<div class="t " style="left:29px;top:711px;">Reversed</div>
<div class="t " style="left:110px;top:711px;">false</div>
<svg style="left:4px;top:731px" width="94" height="19" viewBox="0 0 94 19"><path d="M0.5,1 Q2,15 8,16.5 L40,16.5 Q44,16 46,1" fill="#f0f0f0" stroke="#000" stroke-width="1"/><path d="M44,1 Q48,16 54,17.5 L86,17.5 Q90,17 92,1" fill="#fff" stroke="#000" stroke-width="1"/><path d="M0,0.5 H94" stroke="#828790" stroke-width="1"/></svg>
<div class="t " style="left:14px;top:734px;">View</div>
<div class="t " style="left:60px;top:735px;">Data</div>
<div class="a" style="left:2px;top:749px;width:265px;height:1px;background:#d9d9d9"></div>
<div class="a" style="left:266px;top:458px;width:1px;height:292px;background:#d9d9d9"></div>
<svg style="left:273px;top:154px" width="1107" height="574" viewBox="273 154 1107 574"><g clip-path="url(#vp)"><defs>
<linearGradient id="bg" x1="0" y1="0" x2="0" y2="1"><stop offset="0" stop-color="#333365"/><stop offset="1" stop-color="#9797a9"/></linearGradient>
<linearGradient id="cyl" x1="0" y1="0" x2="1" y2="0"><stop offset="0" stop-color="#a2ff9c"/><stop offset="0.6" stop-color="#ddffd9"/><stop offset="1" stop-color="#a2ff9c"/></linearGradient>
<linearGradient id="cyl2" x1="0" y1="0" x2="1" y2="0"><stop offset="0" stop-color="#a2ff9c"/><stop offset="0.7" stop-color="#c9ffc4"/><stop offset="1" stop-color="#a2ff9c"/></linearGradient>
<pattern id="stripe" width="4" height="40" patternUnits="userSpaceOnUse"><rect width="4" height="40" fill="#0b3cc8"/><rect x="0" width="1.6" height="40" fill="#161616"/></pattern>
<clipPath id="vp"><rect x="273" y="154" width="1107" height="574"/></clipPath>
</defs>
<rect x="273" y="154" width="1107" height="574" fill="url(#bg)"/>
<g fill="#2862a8" font-family="Liberation Serif" font-size="40" stroke="#2862a8" stroke-width="0.3"><text transform="matrix(0.866,-0.5,-0.15,1,588,269)" textLength="147" lengthAdjust="spacingAndGlyphs">YZ_Plane</text><text transform="matrix(0.866,0.5,-0.12,1,600,245)" textLength="124" lengthAdjust="spacingAndGlyphs">X_Axis</text><text transform="matrix(0.866,0.5,-0.1,1,876,93)" textLength="142" lengthAdjust="spacingAndGlyphs">XZ_Plane</text></g>
<polygon fill="#a2ff9c" points="502,349 512,343 561,371 826,223 834,223 834,212.5 858,198.5 858,150 886,150 1225,346 1225,470 861,679.5 502,473"/>
<path fill="#0a359b" d="M540,382 L561,371 L803,231.5 Q826,215 846,230 L1198,433 L1198,456 C1040.5,574 1074.7,557 917.7,615.5 L887,598 L860,560 Z"/>
<path fill="url(#stripe)" d="M1198,433 C1040.5,553 1074.7,536.3 917.7,594.4 L917.7,615.5 C1074.7,557 1040.5,574 1198,456 Z"/>
<path fill="none" stroke="#111" stroke-width="1.5" d="M1198,456 C1040.5,574 1074.7,557 917.7,615.5"/>
<path fill="#0a359b" d="M1198,433 C1040.5,553 1074.7,536.3 917.7,594.4 L887,578 L860,560 L540,382 L561,371 L803,231.5 Q826,215 846,230 Z"/>
<path fill="none" stroke="#151515" stroke-width="1.5" d="M561,371 L803,231.5 Q826,215 846,230 L1198,433"/>
<path fill="none" stroke="#111" stroke-width="1.2" d="M1198,433 C1040.5,553 1074.7,536.3 917.7,594.4 L887,578 M1198,433 L1198,456"/>
<path fill="#0a2a85" d="M983,480 Q990,470 1003,473 L1055,472 Q1075,470 1086,486 Q1088,494 1078,500 L1030,527 Q1012,534 996,522 L988,512 Q980,505 984,497 Q978,488 983,480 Z"/>
<path fill="#0b50e6" d="M1046,474 L1056,472 Q1075,470 1086,486 L1084,494 L1062,497 L1046,497 Z"/>
<path fill="#a2ff9c" d="M1043,497 Q1058,490 1074,496 L1078,500 L1050,516 L1043,516 Z"/>
<path fill="none" stroke="#111" stroke-width="1.4" d="M983,480 Q990,470 1003,473 L1055,472 Q1075,470 1086,486 Q1088,494 1078,500 L1030,527 Q1012,534 996,522 L988,512 Q980,505 984,497 Q978,488 983,480 Z M1065,471 L1065,491 M1074,496 L1080,492"/>
<path fill="url(#cyl)" d="M986.5,445 L1046.5,445 L1046.5,515 L1030,527 Q1012,534 996,522 L986.5,512 Z"/>
<rect x="1037" y="458" width="9.5" height="60" fill="#a2ff9c"/>
<ellipse cx="1016.5" cy="445" rx="30" ry="17" fill="#a2ff9c" stroke="#1ea31e" stroke-width="1.6"/>
<path d="M986.5,445 L986.5,512 M1046.5,445 L1046.5,512 M1037,459 L1037,522" stroke="#1ea31e" stroke-width="1.3" fill="none"/>
<polygon fill="#a2ff9c" points="502,349 512,343 870,550 861,555"/>
<polygon fill="#a2ff9c" points="502,349 861,555 861,679.5 502,473"/>
<path fill="#0b1f6a" d="M886,550 Q899,554 898,564 Q896,575 886,577 Z"/>
<path fill="none" stroke="#111" stroke-width="1.3" d="M886,550 Q899,554 898,564 Q896,575 886,577"/>
<polygon fill="#0a359b" points="887,578 918,594 918,616 894.6,603"/>
<path fill="none" stroke="#111" stroke-width="1.5" d="M887,578 L918,594 M894.6,604 L918,616"/>
<path fill="#a2ff9c" d="M809.9,514.5 L836.2,499.4 C845,494 870,490 887,511 L887,569 L880,577 L894.6,591.8 L894.6,619.8 L861,640 L861,555 Z"/>
<path fill="url(#cyl2)" d="M878.6,512 L887,511 L887,569 L880,577 L878.6,577 Z"/>
<path fill="#a2ff9c" d="M894.6,619.8 L917.7,615.5 C1074.7,557 1040.5,574 1198,456 L1225,470 L861,679.5 L861,640 Z"/>
<polygon fill="#a2ff9c" points="1192,420 1216,405.6 1225,401 1225,470 1198,455 1198,434 1192,429"/>
<g stroke="#1ea31e" stroke-width="1.5" fill="none" stroke-linejoin="round">
<path d="M502,349 L502,473 L861,679.5 L1225,470 L1225,346"/>
<path d="M502,349 L512,343 M502,349 L861,555 M502,404 L861,611 M512,343 L809,514"/>
<path d="M858,150 L858,198.5 L834,212.5 L834,223 M858,198.5 L1216,405.6 M834,212.5 L1192,420 M867.7,150 L1216,351 M886,150 L1225,346 L1216,351 L1216,405.6 L1192,420 L1192,429"/>
<path d="M1225,401 L1216,405.6"/>
<path d="M861.2,555.7 L861.2,679.5 M861.2,555.7 L870.7,550.7 L870.7,606.6 L861.2,610.5 M809.9,514.5 L836.2,499.4 C845,494 870,490 887,511 L887,569"/>
<path d="M878.6,523.6 L851,539.2 L870.7,550.7 M878.6,523.6 L878.6,580 M870.7,582.8 L877,579.5 L894.6,591.8 L870.7,606.6 M894.6,591.8 L894.6,619.8 L908,612"/>
</g>
<g fill="#35e035"><circle cx="502" cy="349" r="2"/><circle cx="512" cy="343" r="2"/><circle cx="502" cy="404" r="2"/><circle cx="502" cy="473" r="2"/><circle cx="861" cy="679.5" r="2"/><circle cx="1225" cy="470" r="2"/><circle cx="1225" cy="346" r="2"/><circle cx="1216" cy="351" r="2"/><circle cx="1225" cy="401" r="2"/><circle cx="1216" cy="405.6" r="2"/><circle cx="1192" cy="420" r="2"/><circle cx="834" cy="212.5" r="2"/><circle cx="861.2" cy="555.7" r="2"/><circle cx="861.2" cy="610.5" r="2"/><circle cx="894.6" cy="591.8" r="2"/><circle cx="894.6" cy="619.8" r="2"/><circle cx="870.7" cy="550.7" r="2"/><circle cx="836.2" cy="499.4" r="2"/><circle cx="809.9" cy="514.5" r="2"/><circle cx="851" cy="539.2" r="2"/><circle cx="878.6" cy="523.6" r="2"/><circle cx="878.6" cy="580" r="2"/><circle cx="870.7" cy="606.6" r="2"/></g>
<g stroke="#3395ff" stroke-width="2.3" fill="none" transform="translate(0,1)">
<path d="M283,410 L742,145 M283,410 L848,735.5 M1016,145 L1400,367 M910,736 L1400,453"/>
<path d="M581,150 L581,730 M1177,150 L1177,730 M879,150 L879,411 M879,679 L879,730"/>
<path d="M581,238 L986,473 M1037.6,503.4 L1177,582"/>
<path d="M581,582 L697,516 M754,482.5 L879,410 L1055,309 M1109,278.3 L1177,238"/>
</g>
<g stroke="#3395ff" stroke-width="2.3" fill="none" transform="translate(0,1)">
<path d="M879,414.5 L879,676" stroke-dasharray="4,12.2"/>
<path d="M997,480 L1032,500" stroke-dasharray="4.5,12.5"/>
<path d="M706,510.7 L752,484" stroke-dasharray="4.2,12"/>
<path d="M1065,303.5 L1100,283" stroke-dasharray="4,10.5"/>
</g>
<g fill="#2862a8" font-family="Liberation Serif" font-style="italic" font-size="36"><text transform="matrix(0.866,-0.5,0,1,588,566)" textLength="110" lengthAdjust="spacingAndGlyphs">Y_Axis</text></g>
<text font-family="Liberation Serif" font-style="italic" font-size="35" fill="#000" transform="matrix(0,-1,-1,-0.6,889,758)" textLength="115" lengthAdjust="spacingAndGlyphs">Z_Axis</text>
<text x="510" y="311" font-size="18" stroke="#fff" stroke-width="0.4" font-family="Liberation Serif" fill="#fff" textLength="64" lengthAdjust="spacingAndGlyphs">0.40 mm</text>
<path d="M503.5,328 L503.5,314.5 L514,309 L515.5,320" stroke="#fff" stroke-width="1.4" fill="none"/>
<path d="M499,324 L508,333 M508,324 L499,333 M511,317 L520,326 M520,317 L511,326" stroke="#fff" stroke-width="0.9"/>
<g>
<path d="M1297,195.5 C1312,198 1330,204 1337,212 C1342,222 1341,248 1338,262 C1332,272 1310,282 1297,283.5 C1284,282 1262,272 1256,262 C1253,248 1252,222 1257,212 C1264,204 1282,198 1297,195.5 Z" fill="#f4f6fa" stroke="#e2e6ee" stroke-width="1.5"/>
<path d="M1297,236 L1297,283 M1297,236 L1339,214 M1297,236 L1255,214" stroke="#dde1ea" stroke-width="7" fill="none"/>
<circle cx="1297" cy="236" r="9" fill="#eef1f6" stroke="#e3e7ee" stroke-width="1"/>
<path d="M1297,218 V229 M1297,240 L1268,252 M1302,240 L1325,252" stroke="#c8ccd8" stroke-width="1" fill="none"/>
<path d="M1292,240 L1268,254" stroke="#b8f0b8" stroke-width="0.8"/>
<text x="0" y="0" font-size="10" fill="#555" font-style="italic" transform="translate(1285,207) rotate(24)">Top</text>
<text x="0" y="0" font-size="11" fill="#555" font-style="italic" transform="translate(1262,241) rotate(33)">Front</text>
<text x="0" y="0" font-size="11" fill="#555" font-style="italic" transform="translate(1311,264) rotate(-38)">Right</text>
<path d="M1249,208 L1258,258" stroke="#1a1acc" stroke-width="1.3"/>
<path d="M1258,258 L1296,292" stroke="#cc1a2a" stroke-width="1.3"/>
<text x="1245" y="208" font-size="8" fill="#1a1acc">Z</text>
<text x="1299" y="297" font-size="9" fill="#dd2222">X</text>
<g fill="#e4e8f0">
<path d="M1289,171 L1297,162 L1305,171 Z"/>
<path d="M1289,304 L1305,304 L1297,313 Z"/>
<path d="M1231,227 L1231,245 L1222,236 Z"/>
<path d="M1363,227 L1363,245 L1372,236 Z"/>
</g>
<path d="M1274,172 Q1256,180 1245,193" stroke="#e4e8f0" stroke-width="4" fill="none"/>
<path d="M1240,193 L1252,195 L1244,185 Z" fill="#e4e8f0"/>
<path d="M1320,172 Q1338,180 1349,193" stroke="#e4e8f0" stroke-width="4" fill="none"/>
<path d="M1354,193 L1342,195 L1350,185 Z" fill="#e4e8f0"/>
<path d="M1324,289 L1335,284 L1346,289 L1346,301 L1335,306 L1324,301 Z" fill="#d8d8d8"/>
<path d="M1324,289 L1335,284 L1346,289 L1335,294 Z" fill="#f4f4f4"/>
<path d="M1335,294 L1346,289 L1346,301 L1335,306 Z" fill="#e6e6e6"/>
<path d="M1351,292 L1364,292 L1357.5,298 Z" fill="#333"/>
</g>
<g stroke-width="2">
<path d="M1351.5,699 L1351.5,681" stroke="#22228a"/><path d="M1349,689 L1354,689 L1351.5,682 Z" fill="#22228a"/>
<path d="M1351.5,699 L1363,692" stroke="#228822"/>
<path d="M1351.5,699 L1367.5,708.5" stroke="#882222"/>
</g>
<g font-size="7.5" fill="#000"><text x="1354" y="681">Z</text><text x="1366" y="693">Y</text><text x="1371" y="710">X</text></g></g></svg>
<div class="a" style="left:1384px;top:156px;width:61px;height:18px;background:#d9d9d9;border:1px solid #c6c6c6;border-right:none"></div>
<div class="t " style="left:1386px;top:158px;font-size:11px;letter-spacing:-0.3px">kicad ...</div>
<svg style="left:1430px;top:160px" width="10" height="10" viewBox="0 0 10 10"><path d="M3.5,0.5 H8.5 V5.5 H6.5" fill="none" stroke="#000" stroke-width="1.2"/><rect x="0.5" y="3.5" width="6" height="5" fill="none" stroke="#000" stroke-width="1.2"/><path d="M0.5,4.5 H6.5 M3.5,1.5 H8.5" stroke="#000" stroke-width="1.5"/></svg>
<div class="a" style="left:1392px;top:181px;width:26px;height:25px;background:#e1e1e1;border:1px solid #adadad"></div>
<svg style="left:1397px;top:186px" width="16" height="15" viewBox="0 0 16 15"><path d="M13,1 V14 L2,7.5 Z" fill="#6a6a6a"/></svg>
<div class="a" style="left:1423px;top:181px;width:22px;height:25px;background:#e1e1e1;border:1px solid #adadad;border-right:none"></div>
<svg style="left:1428px;top:185px" width="17" height="17" viewBox="0 0 17 17"><defs><linearGradient id="bx" x1="0" y1="0" x2="1" y2="1"><stop offset="0" stop-color="#fff"/><stop offset="1" stop-color="#c8c8c8"/></linearGradient></defs><rect x="1" y="1" width="15" height="14" fill="url(#bx)"/><path d="M3,15 H17 V3" stroke="#555" stroke-width="2" fill="none"/></svg>
<div class="a" style="left:1389px;top:220px;width:56px;height:20px;background:#fff;border:1px solid #7a7a7a;border-right:none"></div>
<div class="t " style="left:1431px;top:224px;">90</div>
<div class="a" style="left:1389px;top:262px;width:56px;height:20px;background:#fff;border:1px solid #7a7a7a;border-right:none"></div>
<div class="t " style="left:1431px;top:266px;">90</div>
<div class="a" style="left:1389px;top:302px;width:56px;height:20px;background:#fff;border:1px solid #7a7a7a;border-right:none"></div>
<div class="t " style="left:1431px;top:306px;">90</div>
<div class="a" style="left:1389px;top:341px;width:56px;height:20px;background:#fff;border:1px solid #7a7a7a;border-right:none"></div>
<div class="t " style="left:1416px;top:345px;font-family:Liberation Mono;font-size:12px;letter-spacing:-0.5px">0.10</div>
<div class="a" style="left:1389px;top:382px;width:56px;height:20px;background:#fff;border:1px solid #7a7a7a;border-right:none"></div>
<div class="t " style="left:1416px;top:386px;font-family:Liberation Mono;font-size:12px;letter-spacing:-0.5px">0.10</div>
<div class="a" style="left:1389px;top:422px;width:56px;height:20px;background:#fff;border:1px solid #7a7a7a;border-right:none"></div>
<div class="t " style="left:1416px;top:426px;font-family:Liberation Mono;font-size:12px;letter-spacing:-0.5px">0.10</div>
<div class="a" style="left:1389px;top:457px;width:56px;height:34px;background:#e6e6e6;border:1px solid #b4b4b4;border-right:none"></div>
<svg style="left:1402px;top:460px" width="29" height="29" viewBox="0 0 25 25"><rect x="5" y="9" width="16" height="10" fill="#fff" stroke="#444" stroke-width="0.8"/><g fill="#22bb33"><rect x="6" y="18" width="3" height="4"/><rect x="11.5" y="18" width="3" height="4"/><rect x="17" y="18" width="3" height="4"/><rect x="6" y="6" width="3" height="4"/><rect x="17" y="6" width="3" height="4"/></g><path d="M3,5 Q9,1 16,6 L17,3 L20,11 L12,10 L14,8 Q9,5 5,8 Z" fill="#44cc33" stroke="#1a6a1a" stroke-width="0.6"/></svg>
<div class="a" style="left:1389px;top:496px;width:56px;height:34px;background:#e6e6e6;border:1px solid #b4b4b4;border-right:none"></div>
<svg style="left:1402px;top:499px" width="29" height="29" viewBox="0 0 25 25"><g fill="#ddd" stroke="#555" stroke-width="0.6"><rect x="5" y="3" width="3" height="3"/><rect x="10" y="3" width="3" height="3"/><rect x="15" y="3" width="3" height="3"/></g><rect x="3" y="6" width="18" height="11" fill="#444" stroke="#222" stroke-width="0.8"/><path d="M13,10 L18,7.5 L23,9 V16 L18,18.5 L13,17 Z" fill="#4a7ad0" stroke="#1a3a80" stroke-width="0.6"/><path d="M4,15 Q9,23 18,20 L17,23 L23,19 L16,15 L17,18 Q10,20 7,14 Z" fill="#44cc33" stroke="#1a6a1a" stroke-width="0.6"/></svg>
<div class="a" style="left:1389px;top:534px;width:56px;height:34px;background:#e6e6e6;border:1px solid #b4b4b4;border-right:none"></div>
<svg style="left:1402px;top:537px" width="29" height="29" viewBox="0 0 25 25"><path d="M2,14 L14,8 L24,13 V17 L12,23 L2,18 Z" fill="#f0d020" stroke="#6a5a00" stroke-width="0.8"/><path d="M2,14 L12,19 L24,13 M12,19 V23" stroke="#6a5a00" stroke-width="0.8" fill="none"/><path d="M8,12 L13,10 L16,11.5 L11,14Z" fill="#d8b810" stroke="#6a5a00" stroke-width="0.6"/><path d="M2,5 Q10,0 16,6 L18,3 L20,11 L12,10 L14,8 Q9,4 4,8 Z" fill="#40c040" stroke="#1a6a1a" stroke-width="0.6"/></svg>
<div class="a" style="left:1389px;top:573px;width:56px;height:34px;background:#e6e6e6;border:1px solid #b4b4b4;border-right:none"></div>
<svg style="left:1402px;top:576px" width="29" height="29" viewBox="0 0 25 25"><ellipse cx="12" cy="5" rx="8" ry="3" fill="#f8e860" stroke="#6a5a00" stroke-width="0.8"/><path d="M4,5 V19 Q12,24 20,19 V5" fill="#f0d020" stroke="#6a5a00" stroke-width="0.8"/><path d="M8,12 Q14,18 20,14 L21,11 L24,18 L17,20 L19,17 Q13,20 8,15 Z" fill="#40c040" stroke="#1a6a1a" stroke-width="0.6"/></svg>
<div class="a" style="left:1389px;top:611px;width:56px;height:34px;background:#e6e6e6;border:1px solid #b4b4b4;border-right:none"></div>
<svg style="left:1402px;top:614px" width="29" height="29" viewBox="0 0 25 25"><rect x="1.5" y="1.5" width="22" height="23" fill="#f2f2f2" stroke="#d0d0d0"/><path d="M4,4 H20" stroke="#ddd" stroke-width="1.5"/><path d="M4,10 L10,4 L20,15 L21,20 L15,19 Z" fill="#f0d020" stroke="#222" stroke-width="1"/><path d="M7,7 L17,17 M5.5,9 L15.5,19" stroke="#a08000" stroke-width="0.8"/><path d="M17,18.5 L20,15.5 L21,20 Z" fill="#222"/></svg>
<div class="a" style="left:275px;top:729px;width:114px;height:21px;background:#f0f0f0;border:1px solid #d9d9d9"></div>
<div class="a" style="left:388px;top:729px;width:154px;height:21px;background:#f0f0f0;border:1px solid #d9d9d9"></div>
<div class="a" style="left:541px;top:729px;width:136px;height:21px;background:#f0f0f0;border:1px solid #d9d9d9"></div>
<div class="a" style="left:676px;top:727px;width:161px;height:24px;background:#fff;border:1px solid #d9d9d9;border-bottom:none"></div>
<svg style="left:285px;top:730px" width="17" height="17" viewBox="0 0 17 17"><path d="M1,1 H11 V4 H4.5 V7 H9 V10 H4.5 V15 H1 Z" fill="#d8141c"/><path d="M1,1 H11 V4 H4.5 V7 H9 V10 H4.5 V15 H1 Z" fill="none" stroke="#8a0a10" stroke-width="0.5"/><g transform="translate(10.5,10.5)"><circle r="4.2" fill="#4a78b8"/><g fill="#4a78b8"><rect x="-1.2" y="-5.8" width="2.4" height="11.6"/><rect x="-5.8" y="-1.2" width="11.6" height="2.4"/><rect x="-1.2" y="-5.8" width="2.4" height="11.6" transform="rotate(45)"/><rect x="-1.2" y="-5.8" width="2.4" height="11.6" transform="rotate(-45)"/></g><circle r="1.6" fill="#fff"/></g></svg>
<div class="t " style="left:304px;top:732px;letter-spacing:-0.5px">Start page</div>
<svg style="left:360px;top:732px" width="14" height="14" viewBox="0 0 14 14"><rect x="0.5" y="0.5" width="13" height="13" rx="1.5" fill="#d0d0d0" stroke="#b8b8b8"/><path d="M4,4 L10,10 M10,4 L4,10" stroke="#fff" stroke-width="2"/></svg>
<svg style="left:400px;top:730px" width="17" height="17" viewBox="0 0 17 17"><path d="M1,1 H11 V4 H4.5 V7 H9 V10 H4.5 V15 H1 Z" fill="#d8141c"/><path d="M1,1 H11 V4 H4.5 V7 H9 V10 H4.5 V15 H1 Z" fill="none" stroke="#8a0a10" stroke-width="0.5"/><g transform="translate(10.5,10.5)"><circle r="4.2" fill="#4a78b8"/><g fill="#4a78b8"><rect x="-1.2" y="-5.8" width="2.4" height="11.6"/><rect x="-5.8" y="-1.2" width="11.6" height="2.4"/><rect x="-1.2" y="-5.8" width="2.4" height="11.6" transform="rotate(45)"/><rect x="-1.2" y="-5.8" width="2.4" height="11.6" transform="rotate(-45)"/></g><circle r="1.6" fill="#fff"/></g></svg>
<div class="t " style="left:419px;top:732px;letter-spacing:-0.5px">Doorbell Holder : 1</div>
<svg style="left:513px;top:732px" width="14" height="14" viewBox="0 0 14 14"><rect x="0.5" y="0.5" width="13" height="13" rx="1.5" fill="#d0d0d0" stroke="#b8b8b8"/><path d="M4,4 L10,10 M10,4 L4,10" stroke="#fff" stroke-width="2"/></svg>
<svg style="left:553px;top:730px" width="17" height="17" viewBox="0 0 17 17"><path d="M1,1 H11 V4 H4.5 V7 H9 V10 H4.5 V15 H1 Z" fill="#d8141c"/><path d="M1,1 H11 V4 H4.5 V7 H9 V10 H4.5 V15 H1 Z" fill="none" stroke="#8a0a10" stroke-width="0.5"/><g transform="translate(10.5,10.5)"><circle r="4.2" fill="#4a78b8"/><g fill="#4a78b8"><rect x="-1.2" y="-5.8" width="2.4" height="11.6"/><rect x="-5.8" y="-1.2" width="11.6" height="2.4"/><rect x="-1.2" y="-5.8" width="2.4" height="11.6" transform="rotate(45)"/><rect x="-1.2" y="-5.8" width="2.4" height="11.6" transform="rotate(-45)"/></g><circle r="1.6" fill="#fff"/></g></svg>
<div class="t " style="left:572px;top:732px;letter-spacing:-0.5px">Unnamed1 : 1*</div>
<svg style="left:650px;top:732px" width="14" height="14" viewBox="0 0 14 14"><rect x="0.5" y="0.5" width="13" height="13" rx="1.5" fill="#d0d0d0" stroke="#b8b8b8"/><path d="M4,4 L10,10 M10,4 L4,10" stroke="#fff" stroke-width="2"/></svg>
<svg style="left:690px;top:731px" width="17" height="17" viewBox="0 0 17 17"><path d="M1,1 H11 V4 H4.5 V7 H9 V10 H4.5 V15 H1 Z" fill="#d8141c"/><path d="M1,1 H11 V4 H4.5 V7 H9 V10 H4.5 V15 H1 Z" fill="none" stroke="#8a0a10" stroke-width="0.5"/><g transform="translate(10.5,10.5)"><circle r="4.2" fill="#4a78b8"/><g fill="#4a78b8"><rect x="-1.2" y="-5.8" width="2.4" height="11.6"/><rect x="-5.8" y="-1.2" width="11.6" height="2.4"/><rect x="-1.2" y="-5.8" width="2.4" height="11.6" transform="rotate(45)"/><rect x="-1.2" y="-5.8" width="2.4" height="11.6" transform="rotate(-45)"/></g><circle r="1.6" fill="#fff"/></g></svg>
<div class="t " style="left:710px;top:733px;letter-spacing:-0.5px">tomu_0.4_case : 1*</div>
<svg style="left:810px;top:733px" width="14" height="14" viewBox="0 0 14 14"><rect x="0.5" y="0.5" width="13" height="13" rx="1.5" fill="#e8704c" stroke="#c85030"/><path d="M4,4 L10,10 M10,4 L4,10" stroke="#fff" stroke-width="2"/></svg>
<div class="a" style="left:1px;top:757px;width:1443px;height:1px;background:#c9c9c9"></div>
<div class="a" style="left:1px;top:758px;width:1443px;height:18px;background:#d9d9d9;border-bottom:1px solid #c6c6c6"></div>
<div class="t " style="left:3px;top:760px;font-size:11px;letter-spacing:-0.2px">Python console</div>
<svg style="left:1415px;top:762px" width="10" height="10" viewBox="0 0 10 10"><path d="M3.5,0.5 H8.5 V5.5 H6.5" fill="none" stroke="#000" stroke-width="1.2"/><rect x="0.5" y="3.5" width="6" height="5" fill="none" stroke="#000" stroke-width="1.2"/><path d="M0.5,4.5 H6.5 M3.5,1.5 H8.5" stroke="#000" stroke-width="1.5"/></svg>
<svg style="left:1431px;top:763px" width="9" height="9" viewBox="0 0 9 9"><path d="M0.5,0.5 L8,8 M8,0.5 L0.5,8" stroke="#000" stroke-width="1.4"/></svg>
<div class="a" style="left:1px;top:778px;width:1443px;height:104px;background:#fff;border:1px solid #828790"></div>
<div class="t mono" style="left:6px;top:781px;"><span class="pr">&gt;&gt;&gt;</span> <span class="kw">del</span><span class="pr">(</span>tv<span class="pr">)</span></div>
<div class="t mono" style="left:6px;top:797px;"><span class="pr">&gt;&gt;&gt;</span> </div>
<div class="t mono" style="left:6px;top:813px;"><span class="pr">&gt;&gt;&gt;</span> Gui<span class="pr">.</span>activateWorkbench<span class="pr">(</span><span class="st">'PartDesignWorkbench'</span><span class="pr">)</span></div>
<div class="t mono" style="left:6px;top:829px;"><span class="pr">&gt;&gt;&gt;</span> App<span class="pr">.</span>getDocument<span class="pr">(</span><span class="st">'tomu_0_4_case'</span><span class="pr">).</span>recompute<span class="pr">()</span></div>
<div class="t mono" style="left:6px;top:845px;"><span class="pr">&gt;&gt;&gt;</span> Gui<span class="pr">.</span>getDocument<span class="pr">(</span><span class="st">"tomu_0_4_case"</span><span class="pr">).</span>getObject<span class="pr">(</span><span class="st">"Pad004"</span><span class="pr">).</span>Visibility<span class="pr">=</span>True</div>
<div class="t mono" style="left:6px;top:861px;"><span class="pr">&gt;&gt;&gt;</span> </div>
<div class="a" style="left:1426px;top:779px;width:17px;height:102px;background:#f0f0f0"></div>
<div class="a" style="left:1427px;top:845px;width:15px;height:18px;background:#cdcdcd"></div>
<svg style="left:1430px;top:785px" width="10" height="7" viewBox="0 0 10 7"><path d="M1,6 L5,2 L9,6" fill="none" stroke="#555" stroke-width="1.8"/></svg>
<svg style="left:1430px;top:868px" width="10" height="6" viewBox="0 0 10 6"><path d="M1,1 L5,5 L9,1" fill="none" stroke="#606060" stroke-width="1.3"/></svg>
<div class="t " style="left:7px;top:890px;letter-spacing:-0.45px">Preselected: tomu_0_4_case.XY_Plane. (-10.000000,-9.553129,0.000000)</div>
<svg style="left:1240px;top:889px" width="10" height="15" viewBox="0 0 10 15"><rect x="1" y="1" width="8" height="13" rx="4" fill="none" stroke="#333" stroke-width="1.4"/><path d="M5,3 V6" stroke="#333" stroke-width="1.4"/></svg>
<div class="t " style="left:1257px;top:890px;">CAD</div>
<svg style="left:1281px;top:894px" width="8" height="5" viewBox="0 0 8 5"><path d="M0,0 H8 L4,5 Z" fill="#222"/></svg>
<div class="a" style="left:1297px;top:886px;width:1px;height:23px;background:#d0d0d0"></div>
<div class="t " style="left:1303px;top:890px;letter-spacing:-0.25px">26.24 mm x 13.61 mm</div>
<div class="a" style="left:1425px;top:886px;width:1px;height:23px;background:#d8d8d8"></div>
<svg style="left:1428px;top:896px" width="13" height="12" viewBox="0 0 13 12"><g fill="#a8a8a8"><rect x="9" y="0" width="2" height="2"/><rect x="5" y="4" width="2" height="2"/><rect x="9" y="4" width="2" height="2"/><rect x="1" y="8" width="2" height="2"/><rect x="5" y="8" width="2" height="2"/><rect x="9" y="8" width="2" height="2"/></g></svg>
<div id="frame"></div>
</body></html>
